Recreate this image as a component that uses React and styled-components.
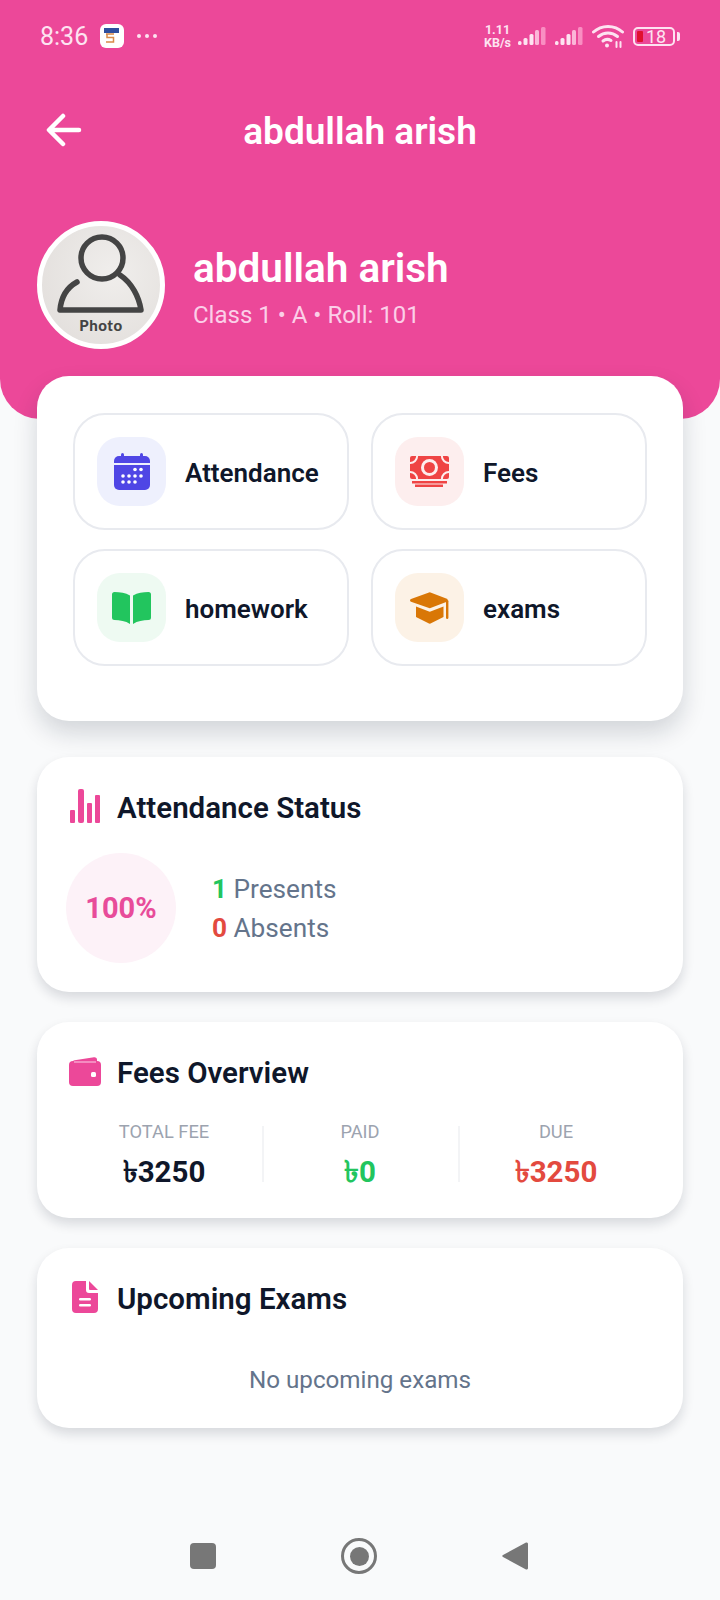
import styled, { createGlobalStyle } from 'styled-components';

const GlobalStyle = createGlobalStyle`
  html, body { margin: 0; padding: 0; background: #f9fafb; }
  body { font-family: Roboto, "Liberation Sans", sans-serif; }
`;

const Page = styled.div`
  width: 720px;
  height: 1600px;
  display: flex;
  flex-direction: column;
  background: #f9fafb;
  overflow: hidden;
`;

// --- HEADER ---
const Header = styled.header`
  height: 419px;
  box-sizing: border-box;
  flex-shrink: 0;
  background: #ec4899;
  border-radius: 0 0 40px 40px;
  color: #fff;
`;

const StatusBar = styled.div`
  height: 72px;
  box-sizing: border-box;
  padding: 0 40px;
  display: flex;
  align-items: center;
  justify-content: space-between;
`;

const StatusSide = styled.div`
  display: flex;
  align-items: center;
  gap: ${props => props.$gap}px;
`;

const Clock = styled.span`
  font-size: 25px;
  color: #fde3f1;
`;

const Speed = styled.span`
  font-size: 12.5px;
  font-weight: 700;
  line-height: 13px;
  text-align: center;
  color: #fde3f1;
  margin-right: -2px;
`;

const Battery = styled.div`
  width: 42px;
  height: 19px;
  box-sizing: border-box;
  border: 2px solid #fde3f1;
  border-radius: 5px;
  display: flex;
  align-items: center;
  padding-left: 2px;
  gap: 3px;
  position: relative;
  margin-right: 5px;
  font-size: 18px;
  color: #fde3f1;
  &::before { content: ''; width: 6px; height: 11px; background: #e0102f; border-radius: 1px; }
  &::after { content: ''; position: absolute; right: -7px; top: 3px; width: 3px; height: 9px; background: #fde3f1; border-radius: 0 2px 2px 0; }
`;

const Toolbar = styled.div`
  height: 62px;
  margin-top: 28px;
  position: relative;
  display: flex;
  align-items: center;
  justify-content: center;
`;

const BackIcon = styled.svg`
  position: absolute;
  left: 46px;
  top: 13px;
`;

const ToolbarTitle = styled.h1`
  margin: 0;
  font-size: 37px;
  font-weight: 600;
`;

const Profile = styled.div`
  margin-top: 59px;
  padding-left: 37px;
  display: flex;
  align-items: center;
  gap: 28px;
`;

const Avatar = styled.div`
  width: 128px;
  height: 128px;
  box-sizing: border-box;
  border: 5px solid #fff;
  border-radius: 50%;
  background: radial-gradient(circle at 60% 40%, #f0eeec, #e0dcd9);
  display: flex;
  flex-direction: column;
  align-items: center;
  padding-top: 7px;
`;

const AvatarLabel = styled.span`
  font-family: Lato, Roboto, sans-serif;
  font-size: 15px;
  font-weight: 900;
  color: #444;
  letter-spacing: 0.6px;
  line-height: 16px;
  margin-top: 2px;
`;

const ProfileText = styled.div`
  padding-top: 3px;
`;

const ProfileName = styled.h2`
  margin: 0;
  font-size: 40.5px;
  font-weight: 600;
  line-height: 48px;
`;

const ProfileMeta = styled.p`
  margin: 8px 0 0;
  font-size: 24px;
  line-height: 30px;
  color: #fbcfe8;
`;

// --- CONTENT ---
const Content = styled.main`
  margin-top: -43px;
  padding: 0 37px;
  display: flex;
  flex-direction: column;
  gap: 30px;
  position: relative;
`;

const Card = styled.section`
  background: #fff;
  border-radius: 32px;
  box-sizing: border-box;
  height: ${props => props.$height}px;
  padding: 29px;
  box-shadow: 0 6px 12px rgba(15, 23, 42, 0.14);
`;

const ActionsCard = styled(Card)`
  padding: 37px 36px;
  margin-bottom: 6px;
  box-shadow: 0 12px 24px rgba(15, 23, 42, 0.16);
`;

const TileGrid = styled.div`
  display: grid;
  grid-template-columns: 1fr 1fr;
  gap: 19px 22px;
`;

const Tile = styled.div`
  height: 117px;
  box-sizing: border-box;
  border: 2px solid #e8eaef;
  border-radius: 32px;
  padding-left: 22px;
  display: flex;
  align-items: center;
  gap: 19px;
`;

const TileIcon = styled.div`
  width: 69px;
  height: 69px;
  border-radius: 23px;
  background: ${props => props.$bg};
  display: flex;
  align-items: center;
  justify-content: center;
`;

const TileLabel = styled.span`
  font-size: 26px;
  font-weight: 600;
  color: #0f172a;
  margin-top: 2px;
`;

const CardHeader = styled.div`
  display: flex;
  align-items: center;
  height: 40px;
  padding-left: 3px;
`;

const CardIconSlot = styled.div`
  width: 32px;
  margin-right: 16px;
  flex-shrink: 0;
  display: flex;
  align-items: center;
  justify-content: center;
`;

const CardTitle = styled.h3`
  margin: 4px 0 0;
  font-size: 29.5px;
  font-weight: 600;
  color: #0f172a;
`;

const AttendanceRow = styled.div`
  margin-top: 27px;
  display: flex;
  align-items: center;
  gap: 36px;
`;

const PercentCircle = styled.div`
  width: 110px;
  height: 110px;
  border-radius: 50%;
  background: #fdf2f8;
  display: flex;
  align-items: center;
  justify-content: center;
  font-size: 29px;
  font-weight: 700;
  color: #e84c9a;
`;

const StatList = styled.div`
  display: flex;
  flex-direction: column;
  gap: 9px;
`;

const StatLine = styled.div`
  font-size: 26.2px;
  line-height: 30px;
  color: #64748b;
`;

const StatCount = styled.b`
  color: ${props => props.$color};
  font-weight: 700;
`;

const FeeGrid = styled.div`
  margin-top: 30px;
  display: grid;
  grid-template-columns: repeat(3, 1fr);
`;

const FeeCell = styled.div`
  height: 56px;
  display: flex;
  flex-direction: column;
  align-items: center;
  position: relative;
  &::before {
    content: ${props => props.$divider ? "''" : 'none'};
    position: absolute;
    left: 0;
    top: 5px;
    width: 2px;
    height: 56px;
    background: #f3f4f6;
  }
`;

const FeeLabel = styled.span`
  font-size: 18.3px;
  line-height: 22px;
  color: #9ca3af;
`;

const FeeValue = styled.span`
  margin-top: 11px;
  font-size: 29.5px;
  line-height: 36px;
  font-weight: 700;
  color: ${props => props.$color};
`;

const EmptyText = styled.p`
  margin: 48px 0 0;
  text-align: center;
  font-size: 24.2px;
  line-height: 30px;
  color: #64748b;
`;

// --- NAV BAR ---
const NavBar = styled.nav`
  margin-top: auto;
  height: 88px;
  padding: 0 192px 0 190px;
  display: flex;
  align-items: center;
  justify-content: space-between;
`;

const NavSquare = styled.div`
  width: 26px;
  height: 26px;
  border-radius: 4px;
  background: #777;
`;

const NavCircle = styled.div`
  width: 36px;
  height: 36px;
  box-sizing: border-box;
  border: 3px solid #777;
  border-radius: 50%;
  display: flex;
  align-items: center;
  justify-content: center;
  &::before { content: ''; width: 19px; height: 19px; border-radius: 50%; background: #777; }
`;

// --- ICONS ---
const Signal = () => (
  <svg width="28" height="20" viewBox="0 0 28 20">
    <rect x="0" y="15" width="3.500" height="4" rx="1.500" fill="#fde3f1" />
    <rect x="5.500" y="12" width="4" height="7" rx="1.500" fill="#fde3f1" />
    <rect x="11.500" y="8" width="4" height="11" rx="1.500" fill="#fde3f1" />
    <rect x="17" y="4" width="4" height="15" rx="1.500" fill="#fbb6d8" />
    <rect x="23" y="1" width="4.500" height="18" rx="1.500" fill="#f98ec2" />
  </svg>
);

const Wifi = () => (
  <svg width="32" height="24" viewBox="0 0 32 24" fill="none" stroke="#fde3f1" strokeWidth="3" strokeLinecap="round">
    <path d="M1.500 8C9.500 .5 22.500 .5 30.500 8" />
    <path d="M6.500 12.500C12 7.800 20 7.800 25.500 12.500" />
    <path d="M11 17C13.500 15 16.500 15 19 16.500" />
    <circle cx="15" cy="21.500" r="2" fill="#fde3f1" stroke="none" />
    <path d="M24.500 18v5M28.500 18v5" strokeWidth="2" />
  </svg>
);

const AppBadge = () => (
  <svg width="24" height="24" viewBox="0 0 24 24">
    <rect width="24" height="24" rx="6" fill="#fff" />
    <rect x="4" y="4" width="15" height="5" fill="#2f4f9e" />
    <path d="M6 10h8M7 10v3.500h6.500v4.500H6" fill="none" stroke="#d98a4a" strokeWidth="1.500" />
  </svg>
);

const Dots = () => (
  <svg width="22" height="6" viewBox="0 0 22 6" fill="#fde3f1">
    <circle cx="3" cy="3" r="2" />
    <circle cx="11" cy="3" r="2" />
    <circle cx="19" cy="3" r="2" />
  </svg>
);

const PersonIcon = () => (
  <svg width="90" height="82" viewBox="0 0 90 82" fill="none" stroke="#444" strokeWidth="5.500" strokeLinecap="round" strokeLinejoin="round">
    <circle cx="46" cy="25" r="21" />
    <path d="M21 49C10 55 5 66 4 77H85C83 64 76 50 64 42" />
  </svg>
);

const CalendarIcon = () => (
  <svg width="36" height="37" viewBox="0 0 36 37">
    <rect x="7" y="0" width="3" height="6" rx="1.500" fill="#4f46e5" />
    <rect x="26" y="0" width="3" height="6" rx="1.500" fill="#4f46e5" />
    <path d="M0 8a5 5 0 0 1 5-5h26a5 5 0 0 1 5 5v2H0z" fill="#4f46e5" />
    <path d="M0 12h36v20a5 5 0 0 1-5 5H5a5 5 0 0 1-5-5z" fill="#4f46e5" />
    <g fill="#fff">
      <circle cx="21" cy="16.500" r="1.800" /><circle cx="27" cy="16.500" r="1.800" />
      <circle cx="9" cy="23" r="1.800" /><circle cx="15" cy="23" r="1.800" /><circle cx="21" cy="23" r="1.800" /><circle cx="27" cy="23" r="1.800" />
      <circle cx="9" cy="29" r="1.800" /><circle cx="15" cy="29" r="1.800" /><circle cx="21" cy="29" r="1.800" />
    </g>
  </svg>
);

const MoneyIcon = () => (
  <svg width="39" height="31" viewBox="0 0 39 31">
    <rect x="0" y="0" width="39" height="23" rx="2" fill="#ef4444" />
    <circle cx="19.500" cy="11.500" r="8.500" fill="#fdeeee" />
    <circle cx="19.500" cy="11.500" r="5.500" fill="#ef4444" />
    <path d="M7 -1a7 7 0 0 1-8 8M32 -1a7 7 0 0 0 8 8M-1 16a7 7 0 0 1 8 8M40 16a7 7 0 0 0-8 8" fill="none" stroke="#fdeeee" strokeWidth="2" />
    <rect x="2" y="25" width="35" height="2.500" fill="#ef4444" />
    <rect x="5" y="28.500" width="28" height="2.500" fill="#ef4444" />
  </svg>
);

const BookIcon = () => (
  <svg width="39" height="32" viewBox="0 0 39 32" fill="#22c55e">
    <path d="M2.500 0C8 0 13.500 .8 18 3.400V32C13.500 29 8 28 2.500 28A2.500 2.500 0 0 1 0 25.500V2.500A2.500 2.500 0 0 1 2.500 0z" />
    <path d="M36.500 0C31 0 25.500 .8 21 3.400V32C25.500 29 31 28 36.500 28A2.500 2.500 0 0 0 39 25.500V2.500A2.500 2.500 0 0 0 36.500 0z" />
  </svg>
);

const CapIcon = () => (
  <svg width="39" height="32" viewBox="0 0 39 32" fill="#d97706">
    <path d="M19 .4a2 2 0 0 1 1.500 0L37.500 7v2.500L20.500 16a2 2 0 0 1-1.500 0L1 9.800a1.500 1.500 0 0 1 0-2.800z" />
    <path d="M6 14.500l13 5a2 2 0 0 0 1.500 0l13-5V25L20.500 31.500a2 2 0 0 1-1.500 0L6 25z" />
    <rect x="36" y="8" width="2.400" height="19" rx="1.200" />
  </svg>
);

const BarsIcon = () => (
  <svg width="30" height="34" viewBox="0 0 30 34" fill="#ec4899">
    <rect x="0" y="21" width="5" height="13" rx="1" />
    <rect x="8" y="0" width="6" height="34" rx="2" />
    <rect x="17" y="14" width="5" height="20" rx="1" />
    <rect x="25" y="6" width="5" height="28" rx="1" />
  </svg>
);

const WalletIcon = () => (
  <svg width="32" height="29" viewBox="0 0 32 29">
    <path d="M4 3.500L25 .2a2.500 2.500 0 0 1 3 2.400V4H5z" fill="#ec4899" />
    <rect x="0" y="4" width="32" height="25" rx="4" fill="#ec4899" />
    <rect x="5" y="4.500" width="22" height="1" fill="#fbcfe8" />
    <rect x="22" y="15" width="5" height="5" rx="1.500" fill="#fff" />
  </svg>
);

const DocIcon = () => (
  <svg width="26" height="32" viewBox="0 0 26 32">
    <path d="M4 0h10v9a3 3 0 0 0 3 3h9v16a4 4 0 0 1-4 4H4a4 4 0 0 1-4-4V4a4 4 0 0 1 4-4z" fill="#ec4899" />
    <path d="M17 0l9 9h-8a1 1 0 0 1-1-1z" fill="#ec4899" />
    <rect x="7" y="17" width="12" height="2.400" rx="1.200" fill="#fff" />
    <rect x="7" y="23" width="12" height="2.400" rx="1.200" fill="#fff" />
  </svg>
);

const tiles = [
  { label: 'Attendance', bg: '#eef0fd', icon: <CalendarIcon /> },
  { label: 'Fees', bg: '#fdeeee', icon: <MoneyIcon /> },
  { label: 'homework', bg: '#eefaf2', icon: <BookIcon /> },
  { label: 'exams', bg: '#fcf2e6', icon: <CapIcon /> },
];

const fees = [
  { label: 'TOTAL FEE', value: '৳3250', color: '#0f172a' },
  { label: 'PAID', value: '৳0', color: '#22c55e' },
  { label: 'DUE', value: '৳3250', color: '#e34a3f' },
];

export default function App() {
  return (
    <Page>
      <GlobalStyle />
      <Header>
        <StatusBar>
          <StatusSide $gap={12}>
            <Clock>8:36</Clock>
            <AppBadge />
            <Dots />
          </StatusSide>
          <StatusSide $gap={9}>
            <Speed>1.11<br />KB/s</Speed>
            <Signal />
            <Signal />
            <Wifi />
            <Battery>18</Battery>
          </StatusSide>
        </StatusBar>
        <Toolbar>
          <BackIcon width="36" height="34" viewBox="0 0 36 34" fill="none" stroke="#fff" strokeWidth="4.500" strokeLinecap="round" strokeLinejoin="round">
            <path d="M33 17H4M17 3L3 17l14 14" />
          </BackIcon>
          <ToolbarTitle>abdullah arish</ToolbarTitle>
        </Toolbar>
        <Profile>
          <Avatar>
            <PersonIcon />
            <AvatarLabel>Photo</AvatarLabel>
          </Avatar>
          <ProfileText>
            <ProfileName>abdullah arish</ProfileName>
            <ProfileMeta>Class 1 • A • Roll: 101</ProfileMeta>
          </ProfileText>
        </Profile>
      </Header>

      <Content>
        <ActionsCard $height={345}>
          <TileGrid>
            {tiles.map(tile => (
              <Tile key={tile.label}>
                <TileIcon $bg={tile.bg}>{tile.icon}</TileIcon>
                <TileLabel>{tile.label}</TileLabel>
              </Tile>
            ))}
          </TileGrid>
        </ActionsCard>

        <Card $height={235}>
          <CardHeader>
            <CardIconSlot><BarsIcon /></CardIconSlot>
            <CardTitle>Attendance Status</CardTitle>
          </CardHeader>
          <AttendanceRow>
            <PercentCircle>100%</PercentCircle>
            <StatList>
              <StatLine><StatCount $color="#22c55e">1</StatCount> Presents</StatLine>
              <StatLine><StatCount $color="#e34a3f">0</StatCount> Absents</StatLine>
            </StatList>
          </AttendanceRow>
        </Card>

        <Card $height={196}>
          <CardHeader>
            <CardIconSlot><WalletIcon /></CardIconSlot>
            <CardTitle>Fees Overview</CardTitle>
          </CardHeader>
          <FeeGrid>
            {fees.map((fee, i) => (
              <FeeCell key={fee.label} $divider={i > 0}>
                <FeeLabel>{fee.label}</FeeLabel>
                <FeeValue $color={fee.color}>{fee.value}</FeeValue>
              </FeeCell>
            ))}
          </FeeGrid>
        </Card>

        <Card $height={180}>
          <CardHeader>
            <CardIconSlot><DocIcon /></CardIconSlot>
            <CardTitle>Upcoming Exams</CardTitle>
          </CardHeader>
          <EmptyText>No upcoming exams</EmptyText>
        </Card>
      </Content>

      <NavBar>
        <NavSquare />
        <NavCircle />
        <svg width="26" height="30" viewBox="0 0 26 30">
          <path d="M24 1.500a1.500 1.500 0 0 1 2 1.500v24a1.500 1.500 0 0 1-2 1.500L1 16a1.200 1.200 0 0 1 0-2z" fill="#777" />
        </svg>
      </NavBar>
    </Page>
  );
}
